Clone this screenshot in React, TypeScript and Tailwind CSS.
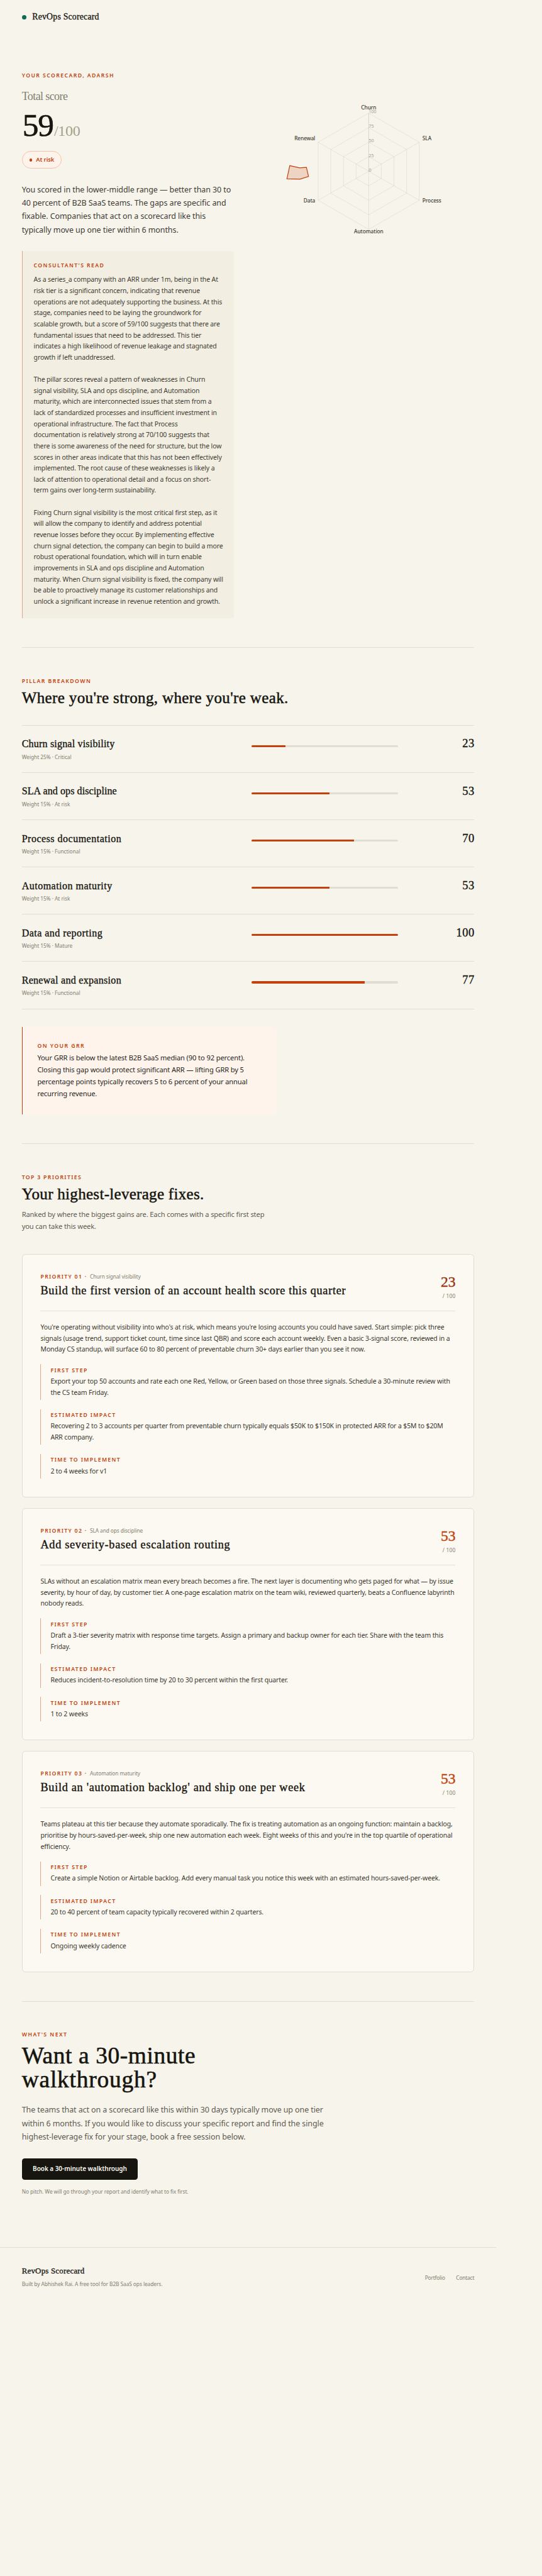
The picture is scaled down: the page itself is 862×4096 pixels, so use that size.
import React from "react";

const SERIF = "font-['Liberation_Serif',serif] text-[#16150f] whitespace-nowrap";
const LABEL = "font-semibold text-[#c2410c] text-[8.68px] leading-[12px] whitespace-nowrap";
const SMALL = "text-[8.4px] leading-[12px] text-[#838070] whitespace-nowrap";

function Lines({ text, className }: { text: string[]; className: string }) {
  return (
    <p className={className}>
      {text.map((line, i) => (
        <span key={i} className="block whitespace-pre">
          {line || " "}
        </span>
      ))}
    </p>
  );
}

const READ = [
  "As a series_a company with an ARR under 1m, being in the At",
  "risk tier is a significant concern, indicating that revenue",
  "operations are not adequately supporting the business. At this",
  "stage, companies need to be laying the groundwork for",
  "scalable growth, but a score of 59/100 suggests that there are",
  "fundamental issues that need to be addressed. This tier",
  "indicates a high likelihood of revenue leakage and stagnated",
  "growth if left unaddressed.",
  "",
  "The pillar scores reveal a pattern of weaknesses in Churn",
  "signal visibility, SLA and ops discipline, and Automation",
  "maturity, which are interconnected issues that stem from a",
  "lack of standardized processes and insufficient investment in",
  "operational infrastructure. The fact that Process",
  "documentation is relatively strong at 70/100 suggests that",
  "there is some awareness of the need for structure, but the low",
  "scores in other areas indicate that this has not been effectively",
  "implemented. The root cause of these weaknesses is likely a",
  "lack of attention to operational detail and a focus on short-",
  "term gains over long-term sustainability.",
  "",
  "Fixing Churn signal visibility is the most critical first step, as it",
  "will allow the company to identify and address potential",
  "revenue losses before they occur. By implementing effective",
  "churn signal detection, the company can begin to build a more",
  "robust operational foundation, which will in turn enable",
  "improvements in SLA and ops discipline and Automation",
  "maturity. When Churn signal visibility is fixed, the company will",
  "be able to proactively manage its customer relationships and",
  "unlock a significant increase in revenue retention and growth.",
];

const CX = 201.4;
const CY = 158.3;
const R = 92.4;

function ring(k: number) {
  const x = R * k * 0.8705;
  const y = R * k;
  return `${CX},${CY - y} ${CX + x},${CY - y / 2} ${CX + x},${CY + y / 2} ${CX},${CY + y} ${CX - x},${CY + y / 2} ${CX - x},${CY - y / 2}`;
}

const AXES: [string, number, number, "start" | "middle" | "end"][] = [
  ["Churn", CX, 60.1, "middle"],
  ["SLA", 286.8, 109.2, "start"],
  ["Process", 286.8, 207.6, "start"],
  ["Automation", CX, 256.9, "middle"],
  ["Data", 116.3, 207.6, "end"],
  ["Renewal", 116.3, 109.2, "end"],
];

const TICKS: [string, number][] = [
  ["100", 66.1],
  ["75", 89.3],
  ["50", 112.4],
  ["25", 135.6],
  ["0", 158.5],
];

function Radar() {
  return (
    <svg width="370" height="270" viewBox="0 0 370 270" className="block overflow-visible">
      <g fill="none" stroke="#16150f" strokeOpacity="0.09" strokeWidth="0.8">
        {[0.25, 0.5, 0.75, 1].map((k) => (
          <polygon key={k} points={ring(k)} />
        ))}
        <path d={`M${CX} ${CY - R}V${CY + R}M${CX - 80.4} ${CY - R / 2}L${CX + 80.4} ${CY + R / 2}M${CX - 80.4} ${CY + R / 2}L${CX + 80.4} ${CY - R / 2}`} />
        <path d={`M${CX} ${CY - R}V${CY}`} />
      </g>
      <polygon
        points="75.9,149.3 91.4,152.9 102.3,152.1 105.7,166.6 92,170.9 71.3,170.3"
        fill="#c2410c"
        fillOpacity="0.18"
        stroke="#c2410c"
        strokeWidth="1.2"
      />
      <g className="text-[7.1px]" fill="#a6a08a">
        {TICKS.map(([t, y]) => (
          <text key={t} x={CX} y={y}>
            {t}
          </text>
        ))}
      </g>
      <g className="text-[8.4px] font-medium tracking-[-0.09px]" fill="#3f3d34">
        {AXES.map(([t, x, y, a]) => (
          <text key={t} x={x} y={y} textAnchor={a}>
            {t}
          </text>
        ))}
      </g>
    </svg>
  );
}

const PILLARS = [
  { name: "Churn signal visibility", sub: "Weight 25% · Critical", score: 23, ls: "tracking-[0.2px]" },
  { name: "SLA and ops discipline", sub: "Weight 15% · At risk", score: 53, ls: "tracking-[0.1px]" },
  { name: "Process documentation", sub: "Weight 15% · Functional", score: 70, ls: "tracking-[0.5px]" },
  { name: "Automation maturity", sub: "Weight 15% · At risk", score: 53, ls: "tracking-[0.49px]" },
  { name: "Data and reporting", sub: "Weight 15% · Mature", score: 100, ls: "tracking-[0.47px]" },
  { name: "Renewal and expansion", sub: "Weight 15% · Functional", score: 77, ls: "tracking-[0.3px]" },
];

const PRIORITIES = [
  {
    n: "01",
    pillar: "Churn signal visibility",
    title: "Build the first version of an account health score this quarter",
    score: 23,
    color: "text-[#9a3412]",
    body: [
      "You're operating without visibility into who's at risk, which means you're losing accounts you could have saved. Start simple: pick three",
      "signals (usage trend, support ticket count, time since last QBR) and score each account weekly. Even a basic 3-signal score, reviewed in a",
      "Monday CS standup, will surface 60 to 80 percent of preventable churn 30+ days earlier than you see it now.",
    ],
    first: [
      "Export your top 50 accounts and rate each one Red, Yellow, or Green based on those three signals. Schedule a 30-minute review with",
      "the CS team Friday.",
    ],
    impact: [
      "Recovering 2 to 3 accounts per quarter from preventable churn typically equals $50K to $150K in protected ARR for a $5M to $20M",
      "ARR company.",
    ],
    time: ["2 to 4 weeks for v1"],
  },
  {
    n: "02",
    pillar: "SLA and ops discipline",
    title: "Add severity-based escalation routing",
    score: 53,
    color: "text-[#c2410c]",
    body: [
      "SLAs without an escalation matrix mean every breach becomes a fire. The next layer is documenting who gets paged for what — by issue",
      "severity, by hour of day, by customer tier. A one-page escalation matrix on the team wiki, reviewed quarterly, beats a Confluence labyrinth",
      "nobody reads.",
    ],
    first: [
      "Draft a 3-tier severity matrix with response time targets. Assign a primary and backup owner for each tier. Share with the team this",
      "Friday.",
    ],
    impact: ["Reduces incident-to-resolution time by 20 to 30 percent within the first quarter."],
    time: ["1 to 2 weeks"],
  },
  {
    n: "03",
    pillar: "Automation maturity",
    title: "Build an 'automation backlog' and ship one per week",
    score: 53,
    color: "text-[#c2410c]",
    body: [
      "Teams plateau at this tier because they automate sporadically. The fix is treating automation as an ongoing function: maintain a backlog,",
      "prioritise by hours-saved-per-week, ship one new automation each week. Eight weeks of this and you're in the top quartile of operational",
      "efficiency.",
    ],
    first: ["Create a simple Notion or Airtable backlog. Add every manual task you notice this week with an estimated hours-saved-per-week."],
    impact: ["20 to 40 percent of team capacity typically recovered within 2 quarters."],
    time: ["Ongoing weekly cadence"],
  },
];

const BODY = "text-[10.5px] leading-[17.63px] tracking-[-0.13px] text-[#3a382f]";

function Step({ label, text }: { label: string; text: string[] }) {
  return (
    <div className="border-l border-[#e3a88c] pl-[14.9px] pt-[3.4px] pb-[2.7px]">
      <div className={LABEL + " tracking-[1.4px]"}>{label}</div>
      <Lines text={text} className={"mt-[3.4px] " + BODY} />
    </div>
  );
}

export default function App() {
  return (
    <div className="min-h-[4096px] w-[862px] overflow-hidden bg-[#f7f4ec] font-['Noto_Sans',sans-serif]">
      <div className="ml-[34.7px] w-[719.6px]">
        <header className="flex h-[54.4px] items-center gap-[9.4px]">
          <span className="h-[7.2px] w-[7.2px] rounded-full bg-[#0b6b57]" />
          <span className={SERIF + " text-[13.8px] leading-[20px] tracking-[0.21px] [-webkit-text-stroke:0.3px]"}>RevOps Scorecard</span>
        </header>

        <section className="grid grid-cols-[337px_1fr] gap-x-[46.3px] pt-[59.5px]">
          <div>
            <div className={LABEL + " tracking-[1.43px]"}>YOUR SCORECARD, ADARSH</div>
            <div className="mt-[17.3px] font-['Liberation_Serif',serif] text-[18px] leading-[20px] tracking-[-0.6px] whitespace-nowrap text-[#838070]">Total score</div>
            <div className={SERIF + " mt-[10.4px] flex h-[50px] items-baseline pl-px text-[51.5px] leading-[50px] tracking-[-1.2px]"}>
              <span className="[-webkit-text-stroke:0.6px]">59</span>
              <span className="ml-[1.2px] text-[24px] tracking-[-0.3px] text-[#a6a08a]">/100</span>
            </div>
            <div className="mt-[16.9px] flex h-[27.5px] w-[63.8px] items-center rounded-full border border-[#f3c3a8] bg-[#fef3ea] pl-[11.2px]">
              <span className="h-[4.6px] w-[4.6px] rounded-full bg-[#c2410c]" />
              <span className="ml-[5.7px] text-[9.3px] leading-[12px] font-semibold whitespace-nowrap text-[#c2410c]">At risk</span>
            </div>
            <Lines
              className="mt-[22.9px] text-[12.5px] leading-[21.27px] tracking-[-0.08px] text-[#3f3d34]"
              text={[
                "You scored in the lower-middle range — better than 30 to",
                "40 percent of B2B SaaS teams. The gaps are specific and",
                "fixable. Companies that act on a scorecard like this",
                "typically move up one tier within 6 months.",
              ]}
            />
            <div className="mt-[22.6px] rounded-r-[3.5px] border-l border-[#e0a587] bg-[#f2eee2] pt-[17.6px] pr-[17px] pb-[17.6px] pl-[17.9px]">
              <div className={LABEL + " tracking-[1.42px]"}>CONSULTANT'S READ</div>
              <Lines className="mt-[8.2px] text-[10.5px] leading-[17.635px] tracking-[-0.13px] text-[#3f3d34]" text={READ} />
            </div>
          </div>
          <div className="w-[336px]">
            <div className="-ml-[33.4px]">
              <Radar />
            </div>
          </div>
        </section>

        <section className="mt-[46.2px] border-t border-[#e0ddd4] pt-[46.4px]">
          <div className={LABEL + " tracking-[1.45px]"}>PILLAR BREAKDOWN</div>
          <h2 className={SERIF + " mt-[6.9px] text-[25px] leading-[28px] tracking-[0.37px] [-webkit-text-stroke:0.5px]"}>Where you're strong, where you're weak.</h2>
          <div className="mt-[29.4px] border-t border-[#e0ddd4]">
            {PILLARS.map((p) => (
              <div key={p.name} className="flex h-[75.1px] border-b border-[#e0ddd4]">
                <div className="w-[365.7px] pt-[20.4px]">
                  <div className={SERIF + " text-[16px] leading-[18px] [-webkit-text-stroke:0.35px] " + p.ls}>{p.name}</div>
                  <div className={SMALL + " mt-[5.2px] tracking-[-0.06px]"}>{p.sub}</div>
                </div>
                <div className="mt-[30.9px] h-[3.2px] w-[232.7px] overflow-hidden rounded-full bg-[#e0ddd4]">
                  <div className="h-full bg-[#c2410c]" style={{ width: `${p.score}%` }} />
                </div>
                <div className={SERIF + " -mr-[0.5px] ml-auto pt-[18.5px] text-[18.6px] leading-[20px] tracking-[0.5px] [-webkit-text-stroke:0.35px]"}>{p.score}</div>
              </div>
            ))}
          </div>
          <div className="mt-[28.8px] h-[138.9px] w-[405.8px] rounded-r-[3.5px] border-l border-[#c2410c] bg-[#fef4eb] pt-[23.3px] pl-[23.7px]">
            <div className={LABEL + " tracking-[1.46px]"}>ON YOUR GRR</div>
            <Lines
              className="mt-[4.6px] text-[11.15px] leading-[18.93px] tracking-[-0.12px] text-[#26241c]"
              text={[
                "Your GRR is below the latest B2B SaaS median (90 to 92 percent).",
                "Closing this gap would protect significant ARR — lifting GRR by 5",
                "percentage points typically recovers 5 to 6 percent of your annual",
                "recurring revenue.",
              ]}
            />
          </div>
        </section>

        <section className="mt-[46.2px] border-t border-[#e0ddd4] pt-[46.3px]">
          <div className={LABEL + " tracking-[1.34px]"}>TOP 3 PRIORITIES</div>
          <h2 className={SERIF + " mt-[7.5px] text-[25px] leading-[28px] tracking-[0.3px] [-webkit-text-stroke:0.5px]"}>Your highest-leverage fixes.</h2>
          <Lines
            className="mt-[8.8px] text-[11.15px] leading-[18.7px] tracking-[-0.13px] text-[#5e5b50]"
            text={["Ranked by where the biggest gains are. Each comes with a specific first step", "you can take this week."]}
          />
          <div className="mt-[34.6px] flex flex-col gap-[17.4px]">
            {PRIORITIES.map((p) => (
              <article key={p.n} className="rounded-[5.5px] border border-[#e0ddd4] bg-[#fcf9f2] px-[28.8px] pb-[28.5px]">
                <div className="flex h-[89.8px] justify-between border-b border-[#e3e0d7] pt-[28.8px]">
                  <div>
                    <div className="flex items-baseline">
                      <span className={LABEL + " w-[78.6px] tracking-[1.33px]"}>PRIORITY {p.n} ·</span>
                      <span className={SMALL + " tracking-[-0.13px]"}>{p.pillar}</span>
                    </div>
                    <h3 className={SERIF + " mt-[6px] text-[18.2px] leading-[20px] tracking-[0.72px] [-webkit-text-stroke:0.4px]"}>{p.title}</h3>
                  </div>
                  <div className="flex flex-col items-end pt-[1.9px]">
                    <div className={"font-['Liberation_Serif',serif] text-[23.6px] leading-[24px] [-webkit-text-stroke:0.4px] " + p.color}>{p.score}</div>
                    <div className={SMALL + " mt-[4.9px] tracking-[0.2px]"}>/ 100</div>
                  </div>
                </div>
                <Lines text={p.body} className={"mt-[17.2px] " + BODY} />
                <div className="mt-[14.5px] flex flex-col gap-[14.6px]">
                  <Step label="FIRST STEP" text={p.first} />
                  <Step label="ESTIMATED IMPACT" text={p.impact} />
                  <Step label="TIME TO IMPLEMENT" text={p.time} />
                </div>
              </article>
            ))}
          </div>
        </section>

        <section className="mt-[46.6px] border-t border-[#e0ddd4] pt-[46.2px]">
          <div className={LABEL + " tracking-[1.5px]"}>WHAT'S NEXT</div>
          <h2 className={SERIF + " mt-[8.8px] text-[37.4px] leading-[38.1px] [-webkit-text-stroke:0.6px]"}>
            <span className="block tracking-[0.6px]">Want a 30-minute</span>
            <span className="block tracking-[0.8px]">walkthrough?</span>
          </h2>
          <Lines
            className="mt-[18px] text-[12.5px] leading-[21.3px] tracking-[-0.1px] text-[#5e5b50]"
            text={[
              "The teams that act on a scorecard like this within 30 days typically move up one tier",
              "within 6 months. If you would like to discuss your specific report and find the single",
              "highest-leverage fix for your stage, book a free session below.",
            ]}
          />
          <button className="mt-[23.4px] flex h-[34.5px] w-[184.5px] items-center justify-center rounded-[4.3px] bg-[#16150f] text-[10px] font-semibold tracking-[-0.04px] whitespace-nowrap text-[#fcf9f2]">
            Book a 30-minute walkthrough
          </button>
          <div className={SMALL + " mt-[12.6px] tracking-[-0.09px]"}>No pitch. We will go through your report and identify what to fix first.</div>
        </section>
      </div>

      <footer className="mt-[82.3px] flex w-[789px] justify-between border-t border-[#e0ddd4] pr-[34.7px] pl-[34.7px]">
        <div className="pt-[29.3px]">
          <div className={SERIF + " text-[12.9px] leading-[16px] tracking-[0.22px] [-webkit-text-stroke:0.3px]"}>RevOps Scorecard</div>
          <div className={SMALL + " mt-[7.1px] tracking-[-0.09px]"}>Built by Abhishek Rai. A free tool for B2B SaaS ops leaders.</div>
        </div>
        <div className={SMALL + " flex gap-[17.3px] pt-[41.7px] tracking-[-0.18px]"}>
          <span>Portfolio</span>
          <span>Contact</span>
        </div>
      </footer>
    </div>
  );
}
